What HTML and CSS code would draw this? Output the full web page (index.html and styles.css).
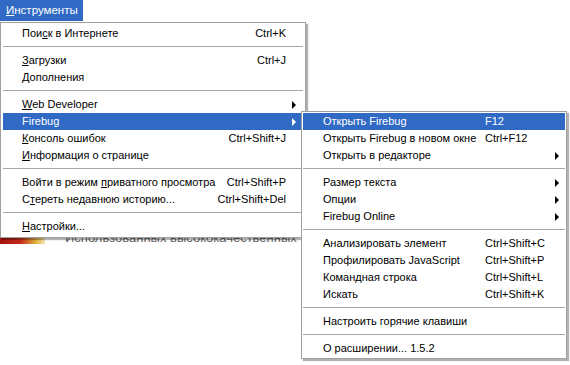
FILE: index.html
```html
<!DOCTYPE html>
<html lang="ru">
<head>
  <meta charset="UTF-8" />
  <title>Инструменты — Firebug</title>
  <link rel="stylesheet" href="styles.css">
</head>
<body>

  <div class="page">
    <div class="menubar">
      <span class="menubar-item active"><u>И</u>нструменты</span>
    </div>
    <div class="content">
      <div class="banner"></div>
      <div class="content-clip">
        <p class="content-text">Использованных высококачественных</p>
      </div>
    </div>
  </div>

  <!-- главное меню -->
  <ul class="menu menu-main">
    <li class="item"><span class="label">Пои<u>с</u>к в Интернете</span><span class="key">Ctrl+K</span></li>
    <li class="sep"></li>
    <li class="item"><span class="label"><u>З</u>агрузки</span><span class="key">Ctrl+J</span></li>
    <li class="item"><span class="label"><u>Д</u>ополнения</span></li>
    <li class="sep"></li>
    <li class="item"><span class="label"><u>W</u>eb Developer</span><span class="arrow"></span></li>
    <li class="item selected"><span class="label">Firebug</span><span class="arrow"></span></li>
    <li class="item"><span class="label"><u>К</u>онсоль ошибок</span><span class="key">Ctrl+Shift+J</span></li>
    <li class="item"><span class="label"><u>И</u>нформация о странице</span></li>
    <li class="sep"></li>
    <li class="item"><span class="label">Войти в режим <u>п</u>риватного просмотра</span><span class="key">Ctrl+Shift+P</span></li>
    <li class="item"><span class="label">С<u>т</u>ереть недавнюю историю...</span><span class="key">Ctrl+Shift+Del</span></li>
    <li class="sep"></li>
    <li class="item"><span class="label"><u>Н</u>астройки...</span></li>
  </ul>

  <!-- подменю Firebug -->
  <ul class="menu menu-sub">
    <li class="item selected"><span class="label">Открыть Firebug</span><span class="key">F12</span></li>
    <li class="item"><span class="label">Открыть Firebug в новом окне</span><span class="key">Ctrl+F12</span></li>
    <li class="item"><span class="label">Открыть в редакторе</span><span class="key"></span><span class="arrow"></span></li>
    <li class="sep"></li>
    <li class="item"><span class="label">Размер текста</span><span class="key"></span><span class="arrow"></span></li>
    <li class="item"><span class="label">Опции</span><span class="key"></span><span class="arrow"></span></li>
    <li class="item"><span class="label">Firebug Online</span><span class="key"></span><span class="arrow"></span></li>
    <li class="sep"></li>
    <li class="item"><span class="label">Анализировать элемент</span><span class="key">Ctrl+Shift+C</span></li>
    <li class="item"><span class="label">Профилировать JavaScript</span><span class="key">Ctrl+Shift+P</span></li>
    <li class="item"><span class="label">Командная строка</span><span class="key">Ctrl+Shift+L</span></li>
    <li class="item"><span class="label">Искать</span><span class="key">Ctrl+Shift+K</span></li>
    <li class="sep"></li>
    <li class="item"><span class="label">Настроить горячие клавиши</span></li>
    <li class="sep"></li>
    <li class="item"><span class="label">О расширении... 1.5.2</span></li>
  </ul>

</body>
</html>
```

FILE: styles.css
```css
body {
  margin: 0;
  width: 570px;
  height: 365px;
  position: relative;
  overflow: hidden;
  background: #fff;
  font-family: 'Liberation Sans', Arial, sans-serif;
  font-size: 11px;
  color: #000;
}

u {
  text-decoration: underline;
  text-underline-offset: 1px;
}

.menubar {
  height: 22px;
  display: flex;
}

.menubar-item {
  width: 83px;
  box-sizing: border-box;
  height: 21px;
  line-height: 21px;
  padding-left: 6px;
  font-size: 11.5px;
}

.menubar-item.active {
  background: #316ac5;
  color: #fff;
}

.content {
  display: flex;
  margin-top: 216px;
  height: 6px;
}

.banner {
  width: 45px;
  height: 6px;
  background: linear-gradient(90deg, #a3130f 0, #c8281b 45%, #e0b23a 80%, #f4e7b0 100%);
}

.content-clip {
  width: 240px;
  height: 6px;
  margin-left: 20px;
  overflow: hidden;
}

.content-text {
  margin: -7px 0 0;
  font-size: 13px;
  line-height: 13px;
  color: #666;
  white-space: nowrap;
}

/* menus */
.menu {
  position: absolute;
  list-style: none;
  margin: 0;
  background: #fff;
  border: 1px solid #a0a0a0;
  box-shadow: 2px 2px 1px rgba(0, 0, 0, 0.3);
}

.menu-main {
  left: 0;
  top: 22px;
  width: 300px;
  padding: 2px;
}

.menu-sub {
  left: 301px;
  top: 111px;
  width: 262px;
  padding: 1px;
}

.item {
  display: grid;
  align-items: center;
  height: 17px;
  white-space: nowrap;
}

.menu-main .item {
  grid-template-columns: 1fr auto 17px;
  padding-left: 19px;
}

.menu-sub .item {
  grid-template-columns: 162px 1fr 14px;
  padding-left: 20px;
}

.item.selected {
  background: #316ac5;
  color: #fff;
}

.label, .key {
  line-height: 17px;
}

.menu-main .key {
  grid-column: 2;
  text-align: right;
}

.arrow {
  grid-column: 3;
  width: 0;
  height: 0;
  border-left: 4px solid #000;
  border-top: 4px solid transparent;
  border-bottom: 4px solid transparent;
}

.menu-main .arrow { margin-left: 6px; }
.menu-sub .arrow { margin-left: 4px; }

.item.selected .arrow {
  border-left-color: #fff;
}

.sep {
  height: 1px;
  margin: 4px 0 5px;
  background: #a6a6a6;
}
```
